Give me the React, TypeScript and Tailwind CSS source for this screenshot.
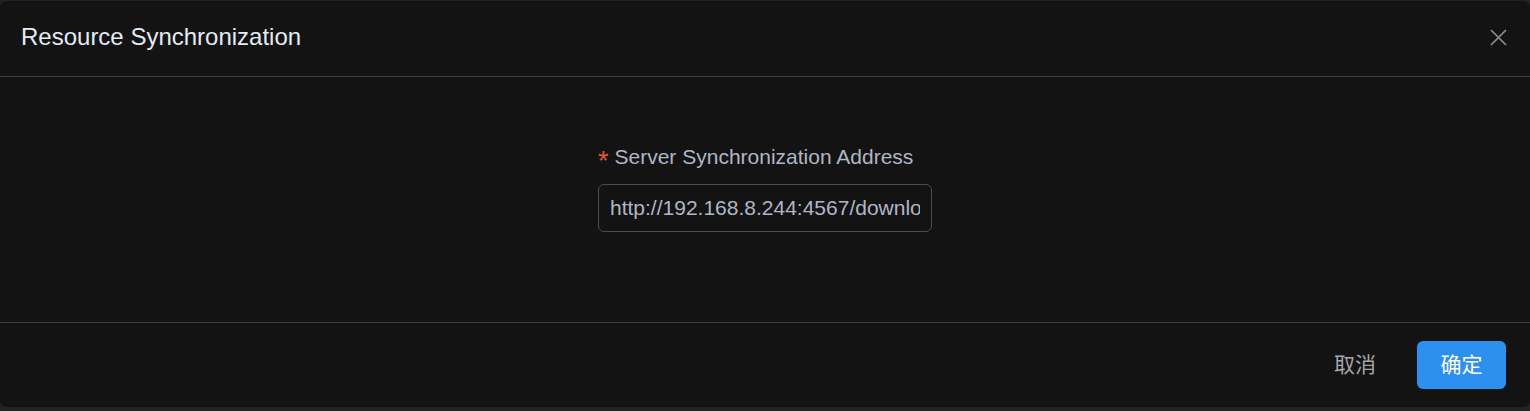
const font = { fontFamily: '"Liberation Sans", Arial, "Noto Sans CJK SC", sans-serif' };

function CloseIcon() {
  return (
    <svg width="17" height="17" viewBox="0 0 17 17" fill="none" stroke="#8d9095" strokeWidth="1.6">
      <path d="M1 1L16 16M16 1L1 16" />
    </svg>
  );
}

export default function App() {
  return (
    <div className="h-[411px] w-full bg-[#232323] pt-px" style={font}>
      <div className="flex h-[406px] w-full flex-col rounded-md bg-[#131313]">
        {/* header */}
        <div className="flex h-[76px] items-center justify-between border-b border-[#3e3e3e] pl-[21px] pr-[23px]">
          <h1 className="pb-[3px] text-[24px] leading-none text-[#e5eaf3]">Resource Synchronization</h1>
          <button type="button" className="pb-[2px]">
            <CloseIcon />
          </button>
        </div>

        {/* body */}
        <div className="flex flex-1 flex-col items-center pt-[69px]">
          <div className="w-[334px]">
            <label className="flex h-[21px] items-center text-[21px] leading-none text-[#b0b6c6]">
              <span className="relative top-[5px] mr-[6px] text-[27px] leading-none text-[#e8542b]">*</span>
              Server Synchronization Address
            </label>
            <div className="mt-[17px] flex h-[48px] items-center overflow-hidden rounded-md border border-[#4c4d4f] px-[11px]">
              <input
                readOnly
                value="http://192.168.8.244:4567/download"
                className="w-full bg-transparent text-[21px] text-[#b0b6c6] outline-none"
                style={font}
              />
            </div>
          </div>
        </div>

        {/* footer */}
        <div className="flex h-[85px] items-center justify-end gap-[41px] border-t border-[#3e3e3e] pr-[24px]">
          <button type="button" className="text-[21px] text-[#a3a6ad]" style={font}>
            取消
          </button>
          <button
            type="button"
            className="h-[48px] w-[89px] rounded-md bg-[#2d8fee] text-[21px] text-white"
            style={font}
          >
            确定
          </button>
        </div>
      </div>
    </div>
  );
}
